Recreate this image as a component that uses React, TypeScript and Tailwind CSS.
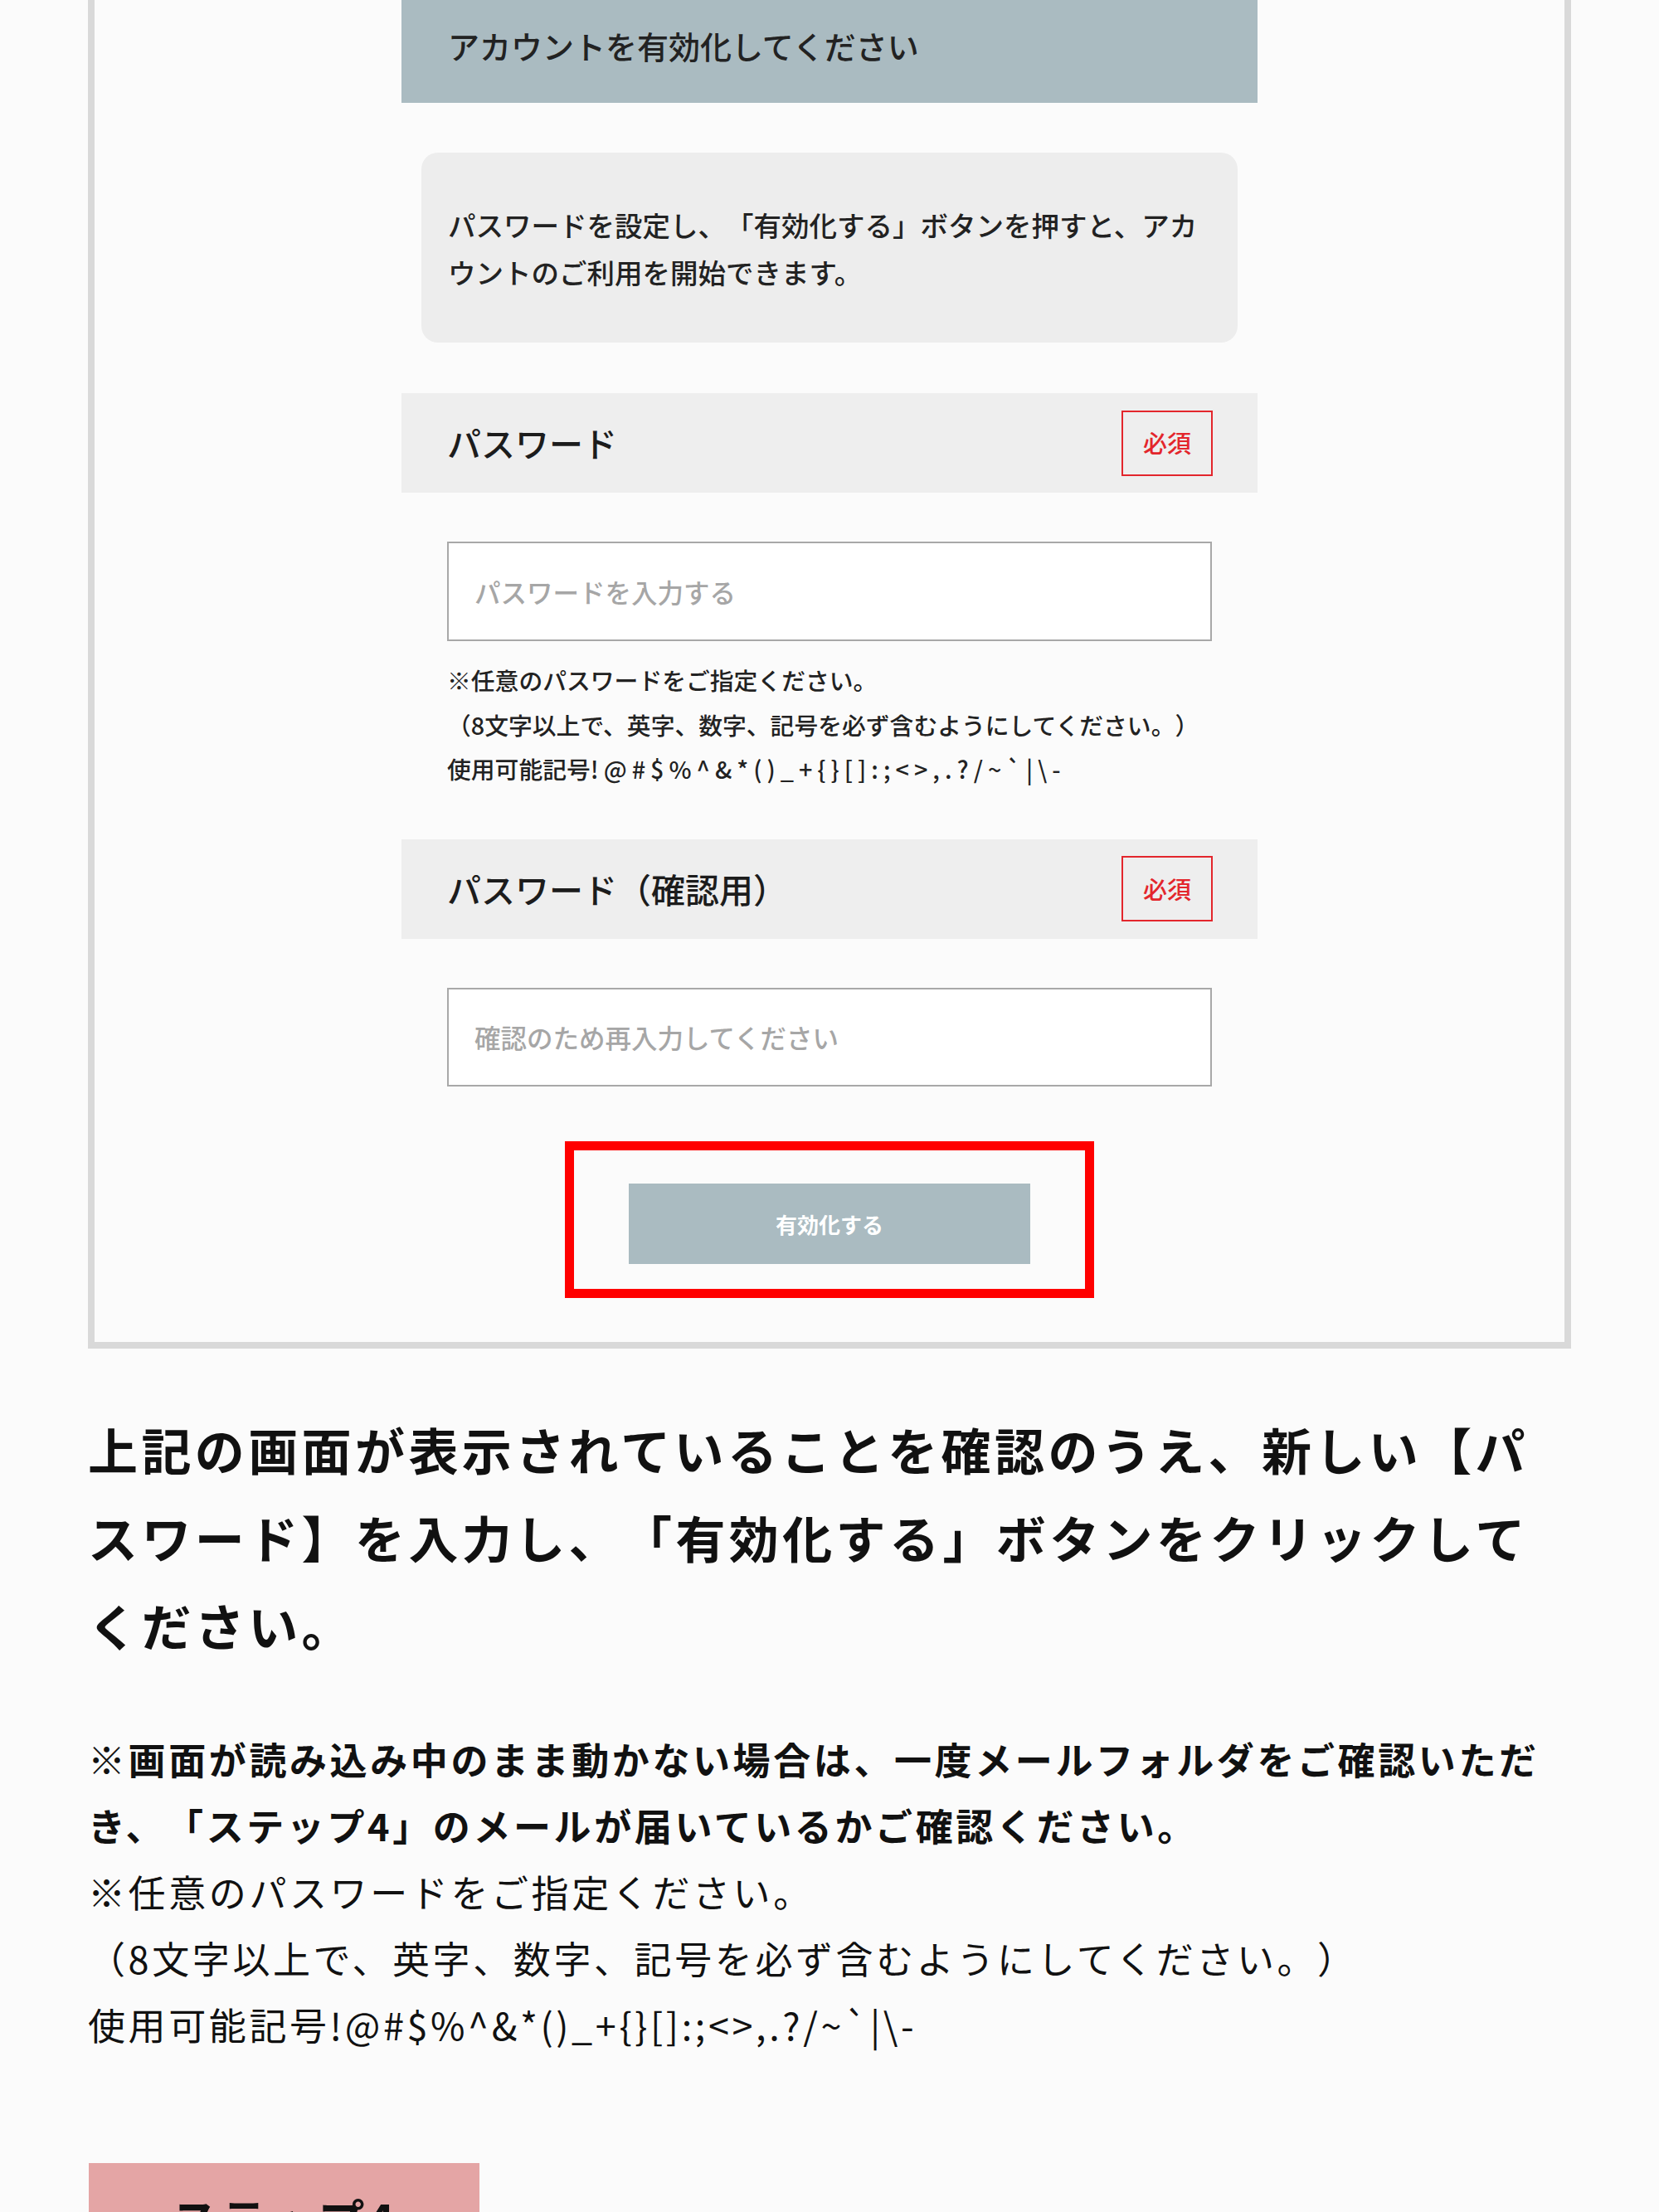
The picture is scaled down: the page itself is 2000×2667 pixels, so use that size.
export default function App() {
  return (
    <div className="min-h-screen overflow-hidden bg-[#fbfbfb] px-[106px] font-['Noto_Sans_CJK_JP',sans-serif] text-[#1c1c1c] [text-spacing-trim:space-all]">
      {/* screenshot frame */}
      <div className="border-[8px] border-t-0 border-[#d9d9d9] pb-[53px]">
        <div className="mx-auto w-[1032px]">
          <div className="flex h-[124px] items-center bg-[#aabbc1] pb-[16px] pl-[56px] text-[38px] font-medium text-[#222]">
            アカウントを有効化してください
          </div>

          <div className="mx-[24px] mt-[60px] flex h-[229px] items-center rounded-[20px] bg-[#ededed] px-[32px] text-[33.5px] font-medium leading-[57px] text-[#222]">
            <p>
              パスワードを設定し、「有効化する」ボタンを押すと、アカ
              <br />
              ウントのご利用を開始できます。
            </p>
          </div>

          <FieldLabel label="パスワード" className="mt-[61px]" />
          <input
            type="password"
            placeholder="パスワードを入力する"
            className="mx-[55px] mt-[59px] block h-[120px] w-[922px] border-2 border-[#a8a8a8] bg-white px-[31px] text-[31.5px] outline-none placeholder:font-medium placeholder:text-[#a6a6a6]"
          />
          <div className="mt-[20px] px-[55px] text-[28.8px] font-medium leading-[53.5px] text-[#222]">
            <p>※任意のパスワードをご指定ください。</p>
            <p>（8文字以上で、英字、数字、記号を必ず含むようにしてください。）</p>
            <p>
              使用可能記号
              <span className="tracking-[6px]">{"!@#$%^&*()_+{}[]:;<>,.?/~`|\\-"}</span>
            </p>
          </div>

          <FieldLabel label="パスワード（確認用）" className="mt-[58px]" />
          <input
            type="password"
            placeholder="確認のため再入力してください"
            className="mx-[55px] mt-[59px] block h-[119px] w-[922px] border-2 border-[#a8a8a8] bg-white px-[31px] text-[31.5px] outline-none placeholder:font-medium placeholder:text-[#a6a6a6]"
          />

          <div className="mx-auto mt-[66px] flex h-[189px] w-[638px] justify-center border-[11px] border-[#ff0000] pt-[40px]">
            <button
              type="button"
              className="h-[97px] w-[484px] bg-[#aabbc1] text-[26px] font-bold text-white"
            >
              有効化する
            </button>
          </div>
        </div>
      </div>

      <p className="mt-[68px] text-[60px] font-bold leading-[106px] tracking-[4.4px] text-[#111]">
        上記の画面が表示されていることを確認のうえ、新しい【パ
        <br />
        スワード】を入力し、「有効化する」ボタンをクリックして
        <br />
        ください。
      </p>

      <div className="mt-[69px] text-[45px] leading-[80px] tracking-[3.6px] text-[#111]">
        <p className="font-bold">
          ※画面が読み込み中のまま動かない場合は、一度メールフォルダをご確認いただ
          <br />
          き、「ステップ4」のメールが届いているかご確認ください。
        </p>
        <p>※任意のパスワードをご指定ください。</p>
        <p>（8文字以上で、英字、数字、記号を必ず含むようにしてください。）</p>
        <p>{"使用可能記号!@#$%^&*()_+{}[]:;<>,.?/~`|\\-"}</p>
      </div>

      <div className="ml-px mt-[127px] h-[150px] w-[471px] bg-[#e4a5a5] pt-[25px] text-center text-[56px] font-bold leading-[84px] tracking-[3px] text-[#111]">
        ステップ4
      </div>
    </div>
  );
}

function FieldLabel({ label, className = "" }: { label: string; className?: string }) {
  return (
    <div
      className={`flex h-[120px] items-center justify-between bg-[#eeeeee] pl-[55px] pr-[54px] ${className}`}
    >
      <span className="text-[41px] font-medium text-[#1c1c1c]">{label}</span>
      <span className="flex h-[79px] w-[110px] items-center justify-center border-2 border-[#e3262c] text-[29px] font-medium text-[#e3262c]">
        必須
      </span>
    </div>
  );
}
